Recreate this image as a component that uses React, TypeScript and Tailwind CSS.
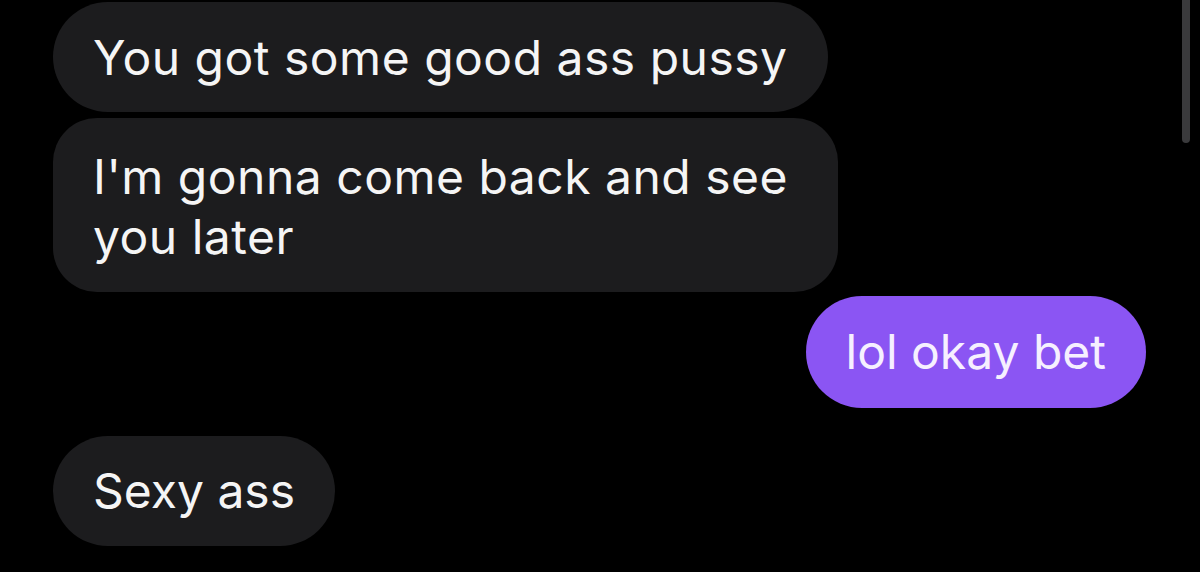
export default function App() {
  const font = { fontFamily: 'Inter, "Liberation Sans", Arial, sans-serif' };
  return (
    <div className="relative w-[1200px] h-[572px] bg-black overflow-hidden" style={font}>
      <div className="flex flex-col items-start pl-[53px] pt-[2px]">
        <div className="bg-[#1c1c1e] text-[#f5f5f5] rounded-[55px] h-[110px] px-[40px] pt-[2px] flex items-center text-[48px] leading-[60px] tracking-[0.5px]">
          You got some good ass pussy
        </div>
        <div className="mt-[6px] bg-[#1c1c1e] text-[#f5f5f5] rounded-[44px] w-[785px] h-[174px] px-[40px] pt-[29px] text-[48px] leading-[60px] tracking-[0.5px]">
          I'm gonna come back and see
          <br />
          you later
        </div>
        <div className="mt-[4px] self-end mr-[54px] bg-[#8b55f3] text-[#f6f0ff] rounded-[56px] h-[112px] px-[40px] flex items-center text-[48px] leading-[60px]">
          lol okay bet
        </div>
        <div className="mt-[28px] bg-[#1c1c1e] text-[#f5f5f5] rounded-[55px] h-[110px] px-[40px] flex items-center text-[48px] leading-[60px]">
          Sexy ass
        </div>
      </div>
      <div className="absolute right-[10px] top-0 w-[8px] h-[143px] rounded-b-full bg-[#3a3a3c]" />
    </div>
  );
}
